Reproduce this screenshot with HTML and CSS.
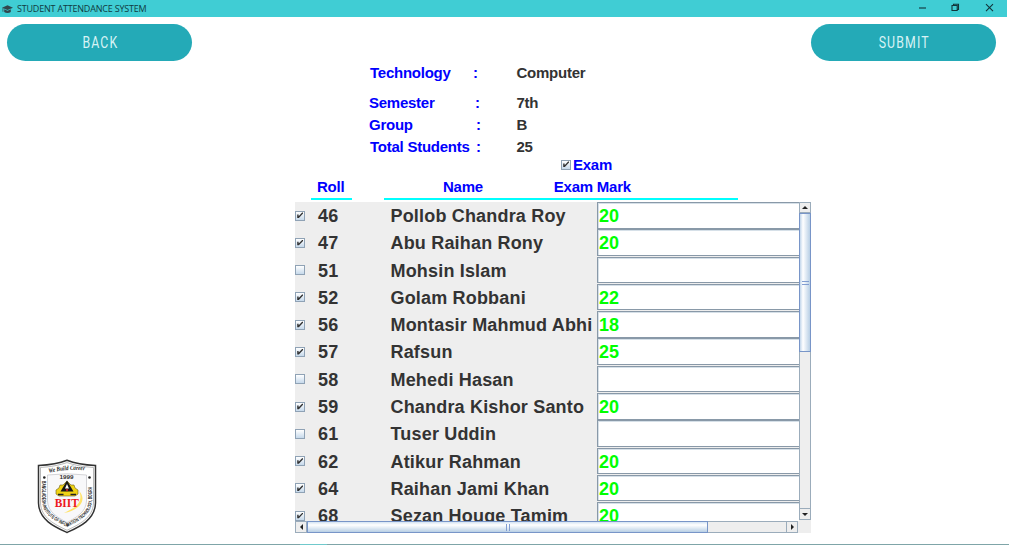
FILE: index.html
```html
<!DOCTYPE html>
<html lang="en">
<head>
<meta charset="utf-8">
<title>Student Attendance System</title>
<link rel="stylesheet" href="styles.css">
</head>
<body>
<div class="window">
  <header class="titlebar">
    <svg class="cap" viewBox="0 0 12 10"><path d="M0 3.5 6 .8l6 2.700-6 2.600z" fill="#31464d"/><path d="M2.400 5.200v3.200c2 1.300 5.200 1.300 7.200 0V5.200L6 6.900z" fill="#31464d"/><path d="M1 4v4" stroke="#31464d" stroke-width=".8"/></svg>
    <span class="title">STUDENT ATTENDANCE SYSTEM</span>
    <svg class="controls" viewBox="0 0 80 17" fill="none" stroke="#12343a" stroke-width="1.100"><path d="M5 8h7"/><path d="M38 5.500h5.200v5H38zM39.500 5.500V4.200h5v5.300h-1.300"/><path d="m72 4.200 7 7m0-7-7 7"/></svg>
  </header>
  <nav class="actions">
    <button class="pill"><span>BACK</span></button>
    <button class="pill"><span>SUBMIT</span></button>
  </nav>
  <main class="content">
    <dl class="info">
      <dt class="first">Technology</dt><dd class="first colon c1">:</dd><dd>Computer</dd>
      <dt>Semester</dt><dd class="colon c2">:</dd><dd>7th</dd>
      <dt>Group</dt><dd class="colon c3">:</dd><dd>B</dd>
      <dt class="in">Total Students</dt><dd class="colon c4">:</dd><dd>25</dd>
    </dl>
    <label class="exam"><i class="check on"></i><span>Exam</span></label>
    <div class="heads"><span class="h-roll">Roll</span><span class="h-rest"><b>Name</b><b>Exam Mark</b></span></div>
    <section class="scroller">
      <div class="rows" id="rows"></div>
      <div class="vbar">
        <span class="arrow"><svg viewBox="0 0 6 3"><path d="M0 3 3 0l3 3z"/></svg></span>
        <span class="vthumb"><i></i></span>
        <span class="vtrack"></span>
        <span class="arrow"><svg viewBox="0 0 6 3"><path d="m0 0 3 3 3-3z"/></svg></span>
      </div>
      <div class="hbar">
        <span class="arrow"><svg class="side" viewBox="0 0 3 6"><path d="M3 0 0 3l3 3z"/></svg></span>
        <span class="hthumb"><i></i></span>
        <span class="htrack"></span>
        <span class="arrow"><svg class="side" viewBox="0 0 3 6"><path d="m0 0 3 3-3 3z"/></svg></span>
      </div>
      <div class="corner"></div>
    </section>
  </main>
  <svg class="crest" viewBox="0 0 60 75">
    <defs>
      <path id="motto" d="M12 14Q30 9.500 49 11.500"/>
      <path id="rim" d="M5.300 22V43C6 57 20 62.500 30 68C40 62.500 54 57 54.700 43V24"/>
    </defs>
    <path d="M30 1.200Q41 5.500 58.500 6.500V44C58 61 42 68 30 73.500C18 68 2 61 1.500 44V6.500Q19 5.500 30 1.200z" fill="#fff" stroke="#333" stroke-width="1.500"/>
    <path d="M30 3.600Q41 7.500 56.500 8.500V44C56 59 42 65.500 30 71.300C18 65.500 4 59 3.500 44V8.500Q19 7.500 30 3.600z" fill="#fff" stroke="#8a8a8a" stroke-width=".6"/>
    <path d="M10.500 16Q30 13.500 49.500 16V42C49 53 40 58 30 63.500C20 58 11 53 10.500 42z" fill="#f8f8fa" stroke="#b9b9bd" stroke-width=".6"/>
    <circle cx="7.300" cy="18.500" r="1.300" fill="#222"/><circle cx="52.500" cy="18.500" r="1.300" fill="#222"/>
    <text class="crest-motto"><textPath href="#motto" textLength="36" lengthAdjust="spacingAndGlyphs">We Build Career</textPath></text>
    <text class="crest-year" x="22.500" y="20" textLength="14" lengthAdjust="spacingAndGlyphs">1999</text>
    <text class="crest-rim"><textPath href="#rim" textLength="110" lengthAdjust="spacingAndGlyphs">BANGLADESH INSTITUTE OF INFORMATION TECHNOLOGY, BOGRA</textPath></text>
    <path d="M42 32C50 40 44 51 27 54C38 49 47 43 42 32z" fill="#ffe36b"/>
    <path d="M19 35v-4l3-2 1-3h3l4-4 4 4h3l1 3 3 2v4l-3 2H22z" fill="#f0d313" stroke="#6f5f1b" stroke-width=".6"/>
    <path d="m30 21.500-6.500 11h13z" fill="#171717"/><path d="m30 25-2 4.500h4z" fill="#fff"/><circle cx="30" cy="31" r="1.100" fill="#d22"/>
    <path d="M21 35.500h5.500m7 0H39" stroke="#222" stroke-width="1.400"/>
    <text class="crest-name" x="17.800" y="47.700" textLength="24" lengthAdjust="spacingAndGlyphs">BIIT</text>
  </svg>
  <footer class="edge"></footer>
</div>
<script src="rows.js"></script>
</body>
</html>
```
FILE: styles.css
```css
* { box-sizing: border-box; }
body { margin: 0; background: #fff; font-family: "Liberation Sans", Arial, sans-serif; }
.window { position: relative; width: 1009px; height: 545px; overflow: hidden; }
.titlebar { width: 1007px; height: 17px; background: #40cdd4; display: flex; align-items: center; padding-left: 2px; }
.cap { width: 11px; height: 10px; margin-right: 4px; }
.title { font: 9px/17px "Open Sans", "Noto Sans", sans-serif; color: #103b41; letter-spacing: -.2px; white-space: nowrap; }
.controls { width: 80px; height: 17px; margin: 0 13px 0 auto; }
.actions { display: flex; justify-content: space-between; padding: 7px 13px 0 7px; }
.pill { width: 185px; height: 37px; border: 0; border-radius: 18.500px; background: #24aab7; color: #d8f3f5; font: 400 16px/37px Roboto, sans-serif; letter-spacing: 1.500px; padding: 0 0 0 2px; }
.pill span { display: inline-block; transform: scaleX(.77); }
.content { width: 516px; margin-left: 295px; font-size: 15px; letter-spacing: -.25px; font-weight: bold; color: #0000fe; }
.info { display: grid; grid-template-columns: 104px 43.500px auto; grid-template-rows: 30px 22px 22px 22px; line-height: 22px; margin: 0 0 0 74px; padding-top: 1px; }
.info dt, .info dd { margin: 0; white-space: nowrap; }
.info dd { color: #333; }
.info .first, .info .in { padding-left: 1px; }
.info .colon { color: #0000fe; padding-left: 0; }
.info .c2 { padding-left: 2px; }
.info .c3, .info .c4 { padding-left: 3px; }
.exam { display: flex; align-items: center; height: 17px; margin: -2px 0 0 266px; gap: 2px; }
.check { display: block; width: 10px; height: 10px; border: 1px solid #8fa2b5; background: linear-gradient(#fff, #c6d9eb); flex: none; }
.check.on::after { content: ""; display: block; width: 8px; height: 8px; background: #333; clip-path: polygon(15% 38%, 32% 38%, 34% 58%, 76% 14%, 88% 14%, 88% 26%, 36% 82%, 15% 82%); }
.heads { display: flex; gap: 32px; height: 24px; margin: 5px 0 0 16px; line-height: 18px; }
.heads > span { border-bottom: 2px solid #00ffff; height: 22px; }
.h-roll { width: 41px; padding-left: 6px; }
.h-rest { width: 354px; display: flex; padding-left: 59px; gap: 71px; white-space: nowrap; }
.scroller { display: grid; grid-template-columns: 504px 12px; grid-template-rows: 319px 12px; height: 331px; overflow: hidden; }
.rows { overflow: hidden; background: #eee; color: #333; font-size: 18px; letter-spacing: .18px; }
.row { display: grid; grid-template-columns: 23px 72.500px 206.500px 202px; align-items: center; height: 27.300px; }
.row > .check { margin-top: -1px; }
.row > span { white-space: nowrap; line-height: 27px; padding-top: 1px; }
.row > .mark { align-self: start; height: 26.500px; border: 1px solid #8999a8; border-right: 0; background: #fff; color: #00ff00; line-height: 26px; padding-left: 1px; letter-spacing: .1px; box-shadow: inset 1px 1px #d6e0e8; }
.vbar { display: flex; flex-direction: column; background: #eee; }
.arrow { width: 12px; height: 12px; border: 1px solid #9bacbb; background: #eee; display: flex; align-items: center; justify-content: center; flex: none; }
.vbar .arrow:first-child { height: 11px; }
.vbar .arrow:last-child { margin-bottom: 1px; }
.arrow svg { width: 6px; height: 3px; fill: #222; }
.arrow .side { width: 3px; height: 6px; }
.vthumb { height: 139px; border: 1px solid #7895c8; background: linear-gradient(90deg, #c2d6eb, #fff 30%, #b8cfe5); display: flex; align-items: center; justify-content: center; }
.vthumb i { width: 7px; height: 4px; border: solid #819dd1; border-width: 1px 0; }
.vtrack { flex: 1; border: solid #9bacbb; border-width: 0 1px; }
.hbar { display: flex; background: #eee; }
.hbar .arrow:last-child { margin-right: 1px; }
.hthumb { width: 401px; border: 1px solid #7895c8; background: linear-gradient(#d5e4f3, #fff 30%, #b8cfe5); display: flex; align-items: center; justify-content: center; }
.hthumb i { width: 4px; height: 7px; border: solid #819dd1; border-width: 0 1px; }
.htrack { flex: 1; border: solid #9bacbb; border-width: 1px 0; }
.corner { background: #eee; }
.crest { position: absolute; left: 37px; top: 459px; width: 60px; height: 75px; }
.crest-motto { font: italic bold 6.500px "Liberation Serif", serif; fill: #222; }
.crest-year { font: bold 5px "Liberation Sans", sans-serif; fill: #333; }
.crest-rim { font: bold 5px "Liberation Sans", sans-serif; fill: #222; }
.crest-name { font: bold 12px "Liberation Serif", serif; fill: #ed1520; }
.edge { position: absolute; left: 0; bottom: 0; width: 1009px; height: 1px; background: linear-gradient(90deg, #7fa5a8 300px, #70c9cc 300px 327px, #7fa5a8 327px); }
```
FILE: rows.js
```javascript
const students = [
  ["46", "Pollob Chandra Roy", "20", true],
  ["47", "Abu Raihan Rony", "20", true],
  ["51", "Mohsin Islam", "", false],
  ["52", "Golam Robbani", "22", true],
  ["56", "Montasir Mahmud Abhi", "18", true],
  ["57", "Rafsun", "25", true],
  ["58", "Mehedi Hasan", "", false],
  ["59", "Chandra Kishor Santo", "20", true],
  ["61", "Tuser Uddin", "", false],
  ["62", "Atikur Rahman", "20", true],
  ["64", "Raihan Jami Khan", "20", true],
  ["68", "Sezan Houge Tamim", "20", true]
];
document.getElementById("rows").innerHTML = students.map(([roll, name, mark, present]) =>
  `<div class="row"><i class="check${present ? " on" : ""}"></i><span>${roll}</span><span>${name}</span><div class="mark">${mark}</div></div>`
).join("");
```
